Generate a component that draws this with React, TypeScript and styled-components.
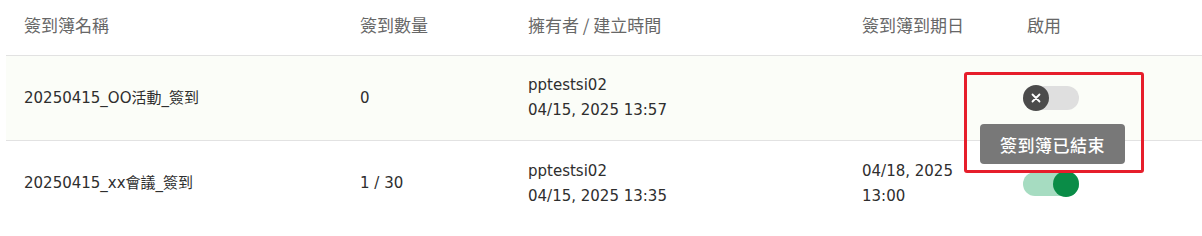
import React from "react";
import styled, { createGlobalStyle } from "styled-components";

const Global = createGlobalStyle`
  html, body { margin: 0; padding: 0; background: #ffffff; }
  body { font-family: "DejaVu Sans", "Noto Sans CJK TC", sans-serif; color: #333333; }
`;

const Wrapper = styled.div`
  padding-left: 6px;
  width: 1196px;
  position: relative;
`;

const Row = styled.div<{ $header?: boolean; $tint?: boolean; $last?: boolean }>`
  display: grid;
  grid-template-columns: 336px 168px 334px 165px 1fr;
  align-items: center;
  padding-left: 18px;
  box-sizing: border-box;
  height: ${(p) => (p.$header ? "56px" : "85px")};
  padding-bottom: ${(p) => (p.$header ? "6px" : "0")};
  border-bottom: ${(p) => (p.$last ? "none" : "1px solid #e2e2e2")};
  background: ${(p) => (p.$tint ? "#fbfdf8" : "#ffffff")};
`;

const HeadCell = styled.div`
  font-size: 17px;
  color: #676767;
  line-height: 22px;
  font-family: "Noto Sans CJK TC", "DejaVu Sans", sans-serif;
  font-weight: 400;
`;

const Cell = styled.div`
  font-size: 15px;
  color: #2e2e2e;
  line-height: 25px;
`;

const ToggleCell = styled.div`
  display: flex;
  justify-content: flex-start;
  margin-left: -4px;
  position: relative;
`;

const Track = styled.div<{ $on: boolean }>`
  position: relative;
  width: 56px;
  height: 24px;
  border-radius: 12px;
  background: ${(p) => (p.$on ? "#a6dcc1" : "#dfdfdf")};
`;

const Knob = styled.div<{ $on: boolean }>`
  position: absolute;
  top: -1px;
  left: ${(p) => (p.$on ? "30px" : "0px")};
  width: 26px;
  height: 26px;
  border-radius: 50%;
  background: ${(p) => (p.$on ? "#0a8c47" : "#4b4b4b")};
  display: flex;
  align-items: center;
  justify-content: center;
`;

const Tooltip = styled.div`
  position: absolute;
  top: 38px;
  left: -43px;
  width: 145px;
  height: 40px;
  border-radius: 4px;
  background: #787878;
  color: #ffffff;
  font-size: 17px;
  font-weight: 500;
  display: flex;
  align-items: center;
  justify-content: center;
  letter-spacing: 0.5px;
  z-index: 2;
  font-family: "Noto Sans CJK TC", sans-serif;
`;

const Highlight = styled.div`
  position: absolute;
  left: 964px;
  top: 72px;
  width: 180px;
  height: 101px;
  box-sizing: border-box;
  border: 3px solid #e61e2b;
  border-radius: 3px;
  z-index: 3;
  pointer-events: none;
`;

const Toggle = ({ on, tip }: { on: boolean; tip?: string }) => (
  <ToggleCell>
    <Track $on={on}>
      <Knob $on={on}>
        {!on && (
          <svg width="12" height="12" viewBox="0 0 12 12">
            <path d="M2.5 2.5 L9.5 9.5 M9.5 2.5 L2.5 9.5" stroke="#ffffff" strokeWidth="1.8" strokeLinecap="round" />
          </svg>
        )}
      </Knob>
    </Track>
    {tip && <Tooltip>{tip}</Tooltip>}
  </ToggleCell>
);

const rows = [
  { name: "20250415_OO活動_簽到", count: "0", owner: "pptestsi02", created: "04/15, 2025 13:57", end: ["", ""], on: false, tip: "簽到簿已結束" },
  { name: "20250415_xx會議_簽到", count: "1 / 30", owner: "pptestsi02", created: "04/15, 2025 13:35", end: ["04/18, 2025", "13:00"], on: true },
];

export default function App() {
  return (
    <>
      <Global />
      <Wrapper>
        <Row $header>
          <HeadCell>簽到簿名稱</HeadCell>
          <HeadCell>簽到數量</HeadCell>
          <HeadCell>擁有者 / 建立時間</HeadCell>
          <HeadCell>簽到簿到期日</HeadCell>
          <HeadCell>啟用</HeadCell>
        </Row>
        {rows.map((r, i) => (
          <Row key={i} $tint={i === 0} $last={i === rows.length - 1}>
            <Cell>{r.name}</Cell>
            <Cell>{r.count}</Cell>
            <Cell>
              <div>{r.owner}</div>
              <div>{r.created}</div>
            </Cell>
            <Cell>
              {r.end[0] && <div>{r.end[0]}</div>}
              {r.end[1] && <div>{r.end[1]}</div>}
            </Cell>
            <Toggle on={r.on} tip={r.tip} />
          </Row>
        ))}
        <Highlight />
      </Wrapper>
    </>
  );
}
